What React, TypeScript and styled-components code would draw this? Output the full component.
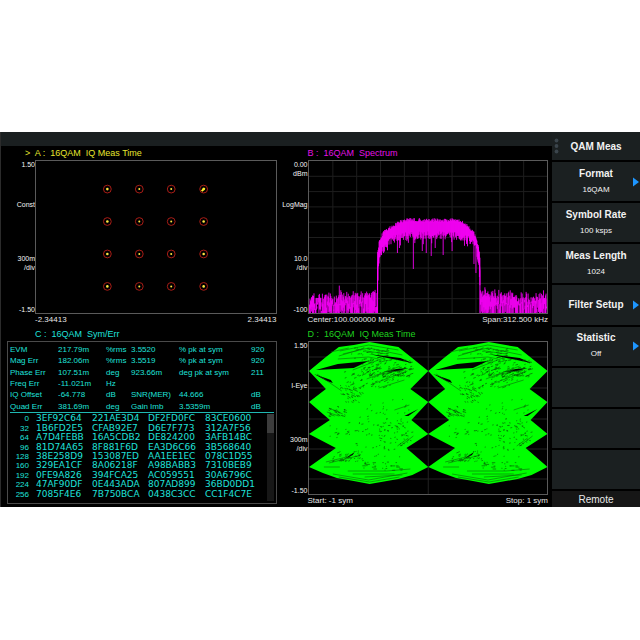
import React from "react";
import styled, { createGlobalStyle } from "styled-components";

const GlobalStyle = createGlobalStyle`
  * { box-sizing: border-box; }
  body {
    margin: 0;
    background: #fff;
    font-family: "Liberation Sans", Arial, sans-serif;
  }
`;

const Page = styled.div`
  padding: 132px 0;
`;

const Analyzer = styled.main`
  display: grid;
  grid-template-columns: 1fr 88px;
  background: #000;
`;

const Screen = styled.div`
  display: flex;
  flex-direction: column;
  border-left: 1px solid #2b2b2b;
  min-width: 0;
`;

const StatusBar = styled.header`
  height: 14px;
  background: #1a1f20;
`;

const Traces = styled.div`
  display: grid;
  grid-template-columns: 1fr 1fr;
  row-gap: 1px;
  flex: 1;
`;

const Panel = styled.section<{ $inset: number }>`
  display: flex;
  flex-direction: column;
  min-width: 0;
  padding-right: ${(p) => p.$inset}px;
`;

const Title = styled.h2<{ $color: string; $indent: number }>`
  margin: 0;
  padding-left: ${(p) => p.$indent}px;
  font-size: 9px;
  line-height: 14px;
  height: 14px;
  font-weight: 400;
  white-space: pre;
  color: ${(p) => p.$color};
`;

const PlotRow = styled.div<{ $gutter: number }>`
  display: grid;
  grid-template-columns: ${(p) => p.$gutter}px 1fr;
  height: 154px;
`;

const Axis = styled.div`
  display: grid;
  grid-template-rows: 40px 54px 1fr 9px;
  font-size: 7px;
  line-height: 9px;
  text-align: right;
  color: #f4f4f4;
`;

const AxisLabel = styled.div`
  white-space: pre-line;
`;

const Plot = styled.svg`
  display: block;
  width: 100%;
  height: 154px;
  border: 1px solid #5a5a5a;
  background: #000;
`;

const Range = styled.div<{ $gutter: number }>`
  display: flex;
  justify-content: space-between;
  padding-left: ${(p) => p.$gutter}px;
  font-size: 8px;
  line-height: 12px;
  color: #e6e6e6;
`;

const Report = styled.div`
  flex: 1;
  display: flex;
  flex-direction: column;
  margin: 0 0 3px 6px;
  padding: 2px;
  border: 1px solid #4a4a4a;
  color: #1fe0da;
`;

const ErrTable = styled.table`
  width: 100%;
  height: 68px;
  table-layout: fixed;
  border-collapse: collapse;
  font-size: 8px;
  line-height: 9px;
  td, th {
    padding: 0;
    text-align: left;
    font-weight: 400;
    white-space: nowrap;
  }
`;

const DumpRow = styled.div`
  display: grid;
  grid-template-columns: 1fr 7px;
  height: 89px;
  border-top: 1px solid #1fb8b2;
`;

const DumpTable = styled.table`
  height: 85px;
  margin-top: 1px;
  table-layout: fixed;
  border-collapse: collapse;
  font-family: "DejaVu Sans", Verdana, sans-serif;
  font-size: 9px;
  line-height: 9px;
  td {
    padding: 0;
    white-space: nowrap;
  }
  th {
    padding: 0 7px 0 0;
    font-family: "Liberation Sans", Arial, sans-serif;
    font-size: 8px;
    font-weight: 400;
    text-align: right;
  }
`;

const ScrollTrack = styled.div`
  margin-top: 1px;
  background: #171717;
`;

const ScrollThumb = styled.div`
  height: 19px;
  background: #3c3c3c;
`;

const Sidebar = styled.nav`
  display: flex;
  flex-direction: column;
  gap: 2px;
`;

const MenuHeader = styled.div`
  display: grid;
  grid-template-columns: 8px 1fr 8px;
  align-items: center;
  height: 28px;
  background: #1b2021;
  color: #f2f2f2;
  font-size: 10px;
  font-weight: 700;
  text-align: center;
  white-space: nowrap;
`;

const MenuItem = styled.button`
  flex: 1;
  display: grid;
  grid-template-columns: 8px 1fr 8px;
  align-items: center;
  margin: 0;
  padding: 0;
  border: 0;
  background: #1b2021;
  font-family: inherit;
  color: #f2f2f2;
  text-align: center;
`;

const MenuText = styled.span`
  grid-column: 2;
  display: flex;
  flex-direction: column;
  white-space: nowrap;
`;

const MenuLabel = styled.span`
  font-size: 10px;
  line-height: 16px;
  font-weight: 700;
`;

const MenuValue = styled.span`
  font-size: 8px;
  line-height: 16px;
`;

const Remote = styled.div`
  height: 16px;
  background: #161616;
  color: #e8e8e8;
  font-size: 10px;
  line-height: 17px;
  text-align: center;
`;

const W = 240;
const H = 152;

function seeded(seed: number) {
  let s = seed;
  return () => {
    s = (s * 16807) % 2147483647;
    return s / 2147483647;
  };
}

function envelope(points: number[][], x: number) {
  for (let i = 1; i < points.length; i++) {
    const [x0, y0] = points[i - 1];
    const [x1, y1] = points[i];
    if (x <= x1) return y0 + ((y1 - y0) * (x - x0)) / (x1 - x0);
  }
  return points[points.length - 1][1];
}

function spectrumPath() {
  const rnd = seeded(4211);
  const top = [[69, 92], [71, 79], [74, 73], [78, 69], [85, 65], [92, 61], [100, 59], [150, 59], [158, 63], [164, 69], [168, 76], [171, 88], [173, 104]];
  const low = [[69, 134], [70, 104], [73, 92], [78, 85], [85, 79], [95, 76], [145, 75], [156, 77], [164, 81], [168, 90], [171, 104], [173, 142]];
  const spikes: Record<number, number> = { 89: 92, 91: 87, 105: 108, 114: 90, 118: 92, 123: 95, 127: 87, 135: 94, 144: 90, 166: 103, 168: 112 };
  let d = "";
  for (let x = 0; x <= W; x += 0.5) {
    let a: number;
    let b: number;
    if (x < 69 || x > 172) {
      const lift = x < 69 ? x / 18 : (240 - x) / 16;
      a = 138 - lift - rnd() * 8 + rnd() * rnd() * 18;
      b = rnd() > 0.4 ? H : 141 + rnd() * 11;
      if (rnd() > 0.96) a -= 4;
    } else {
      a = envelope(top, x) + rnd() * 4 - 2;
      b = envelope(low, x) + rnd() * 8 - 5;
      if (rnd() > 0.9) b += 5;
      if (Number.isInteger(x) && spikes[x]) b = spikes[x];
    }
    d += `M${x} ${a.toFixed(1)}V${b.toFixed(1)}`;
  }
  return d;
}

const LOBE =
  "M0 29L17 15L30 5L45 3L61 0L78 3L90 5L105 17L120 29L102 47L120 60L103 78L120 92L98 106L120 125L104 133L90 137L61 142L45 139L28 136L14 131L0 125L27 106L0 92L21 78L0 60L17 47Z";

function flecks() {
  const rnd = seeded(977);
  const areas = [
    { x: 42, y: 6, w: 38, h: 12, n: 40, slope: -0.15, len: 5 },
    { x: 52, y: 18, w: 50, h: 17, n: 130, slope: -0.3, len: 4 },
    { x: 34, y: 30, w: 60, h: 16, n: 60, slope: -0.35, len: 4 },
    { x: 31, y: 43, w: 24, h: 17, n: 44, slope: 0.45, len: 4 },
    { x: 19, y: 64, w: 17, h: 10, n: 30, slope: 0.4, len: 3 },
    { x: 50, y: 55, w: 50, h: 30, n: 30, slope: -0.3, len: 1 },
    { x: 18, y: 80, w: 86, h: 16, n: 50, slope: -0.2, len: 2 },
    { x: 70, y: 78, w: 32, h: 26, n: 30, slope: 0.25, len: 3 },
    { x: 22, y: 111, w: 30, h: 9, n: 34, slope: -0.4, len: 4 },
    { x: 43, y: 100, w: 50, h: 20, n: 30, slope: -0.2, len: 1 },
    { x: 52, y: 119, w: 40, h: 10, n: 30, slope: 0, len: 5 },
  ];
  let d = "";
  areas.forEach((r) => {
    for (let i = 0; i < r.n; i++) {
      const x = r.x + rnd() * r.w;
      const y = r.y + rnd() * r.h;
      const len = 1 + rnd() * rnd() * r.len;
      d += `M${x.toFixed(1)} ${y.toFixed(1)}l${len.toFixed(1)} ${(len * r.slope).toFixed(1)}`;
    }
  });
  return d;
}

const SPECTRUM = spectrumPath();
const FLECKS = flecks();

function Grid() {
  const lines = [1, 2, 3, 4, 5, 6, 7, 8, 9];
  return (
    <g stroke="#1e1e1e" shapeRendering="crispEdges">
      {lines.map((i) => (
        <path key={i} d={`M${i * 24} 0V${H}M0 ${i * 15.3}H${W}`} />
      ))}
    </g>
  );
}

function Constellation() {
  const xs = [71.5, 103.5, 135.5, 168];
  const ys = [28, 60.5, 93, 125.5];
  return (
    <Plot viewBox={`0 0 ${W} ${H}`} role="img" aria-label="IQ constellation">
      {ys.map((y, r) =>
        xs.map((x, c) => (
          <g key={`${x}-${y}`}>
            <circle cx={x} cy={y} r="3.9" fill="none" stroke="#a81c16" />
            <circle cx={x} cy={y} r={c === 0 || c === 3 ? 1.3 : 1} fill="#ffe640" />
            {c === 3 && r === 0 && <path d={`M${x - 2} ${y + 2}l3-3`} stroke="#fff22a" strokeWidth="2" />}
          </g>
        ))
      )}
    </Plot>
  );
}

function Spectrum() {
  return (
    <Plot viewBox={`0 0 ${W} ${H}`} preserveAspectRatio="none" role="img" aria-label="Spectrum">
      <Grid />
      <path d={SPECTRUM} stroke="#ff00ff" strokeWidth="0.85" fill="none" />
      <path d="M69 152V108L71 88M172 152V110L170 84" stroke="#ff00ff" fill="none" />
    </Plot>
  );
}

function EyeLobe() {
  return (
    <>
      <path d={LOBE} fill="#00ff00" />
      <g fill="#000">
        <path d="M7 28L29 22L60 19L45 26Z" />
        <path d="M5 32L22 38L24 41L18 39Z" />
        <path d="M60 12L92 16L104 21L84 17Z" />
        <path d="M76 30L88 27L100 26L90 29Z" />
        <path d="M34 118L46 110L44 113Z" />
        <path d="M96 74L110 67L100 74Z" />
      </g>
      <g stroke="#0a6a0a" fill="none" strokeWidth="0.6">
        <path d="M31 9L60 3L90 8M34 12L60 6L94 13M29 17L60 15L70 17M57 9L79 12M22 10L40 6M30 14L50 8" />
        <path d="M58 37L92 24M64 42L99 29M70 46L96 38M68 33L94 28M44 28L75 16M8 32L33 49" />
        <path d="M15 125H31M24 132L60 138L99 131M30 135L61 140L91 135M39 129L78 129L102 127M44 132L86 132M56 135L94 133M17 120L38 115M20 121L49 114" />
        <path d="M86 68L101 63M89 104L100 96M92 104L105 94M18 70L30 74M20 66L34 72" />
      </g>
      <path d={FLECKS} stroke="#064a06" strokeWidth="0.6" fill="none" />
    </>
  );
}

function EyeDiagram() {
  return (
    <Plot viewBox={`0 0 ${W} ${H}`} preserveAspectRatio="none" role="img" aria-label="I-Eye diagram">
      <path
        d={`M120 0V${H}M0 15H${W}M0 46H${W}M0 77H${W}M0 107H${W}M0 137H${W}`}
        stroke="#222"
        shapeRendering="crispEdges"
      />
      <EyeLobe />
      <g transform="translate(120 0)">
        <EyeLobe />
      </g>
    </Plot>
  );
}

type TraceProps = {
  title: string;
  color: string;
  gutter: number;
  titleIndent?: number;
  inset?: number;
  axis: string[];
  range: [string, string];
  children: React.ReactNode;
};

function Trace({ title, color, gutter, titleIndent, inset = 0, axis, range, children }: TraceProps) {
  return (
    <Panel $inset={inset}>
      <Title $color={color} $indent={titleIndent ?? gutter}>{title}</Title>
      <PlotRow $gutter={gutter}>
        <Axis>
          {axis.map((label) => (
            <AxisLabel key={label}>{label}</AxisLabel>
          ))}
        </Axis>
        {children}
      </PlotRow>
      <Range $gutter={gutter}>
        <span>{range[0]}</span>
        <span>{range[1]}</span>
      </Range>
    </Panel>
  );
}

const ERRORS = [
  ["EVM", "217.79m", "%rms", "3.5520", "% pk at sym", "920"],
  ["Mag Err", "182.06m", "%rms", "3.5519", "% pk at sym", "920"],
  ["Phase Err", "107.51m", "deg", "923.66m", "deg pk at sym", "211"],
  ["Freq Err", "-11.021m", "Hz", "", "", ""],
  ["IQ Offset", "-64.778", "dB", "SNR(MER)", "44.666", "dB"],
  ["Quad Err", "381.69m", "deg", "Gain Imb", "3.5359m", "dB"],
];

const DUMP = [
  ["0", "3EF92C64", "221AE3D4", "DF2FD0FC", "83CE0600"],
  ["32", "1B6FD2E5", "CFAB92E7", "D6E7F773", "312A7F56"],
  ["64", "A7D4FEBB", "16A5CDB2", "DE824200", "3AFB14BC"],
  ["96", "81D74A65", "8F881F6D", "EA3D6C66", "3B568640"],
  ["128", "38E258D9", "153087ED", "AA1EE1EC", "078C1D55"],
  ["160", "329EA1CF", "8A06218F", "A98BABB3", "7310BEB9"],
  ["192", "0FE9A826", "394FCA25", "AC059551", "30A6796C"],
  ["224", "47AF90DF", "0E443ADA", "807AD899", "36BD0DD1"],
  ["256", "7085F4E6", "7B750BCA", "0438C3CC", "CC1F4C7E"],
];

function SymbolErrors() {
  return (
    <Panel $inset={0}>
      <Title $color="#1fe0da" $indent={34}>{"C :  16QAM  Sym/Err"}</Title>
      <Report>
        <ErrTable>
          <colgroup>
            <col width="48" />
            <col width="48" />
            <col width="25" />
            <col width="48" />
            <col width="72" />
            <col />
          </colgroup>
          <tbody>
            {ERRORS.map((row) => (
              <tr key={row[0]}>
                <th scope="row">{row[0]}</th>
                {row.slice(1).map((cell, i) => (
                  <td key={i}>{cell}</td>
                ))}
              </tr>
            ))}
          </tbody>
        </ErrTable>
        <DumpRow>
          <DumpTable>
            <colgroup>
              <col width="26" />
              <col width="56" />
              <col width="56" />
              <col width="57" />
              <col />
            </colgroup>
            <tbody>
              {DUMP.map((row) => (
                <tr key={row[0]}>
                  <th scope="row">{row[0]}</th>
                  {row.slice(1).map((cell) => (
                    <td key={cell}>{cell}</td>
                  ))}
                </tr>
              ))}
            </tbody>
          </DumpTable>
          <ScrollTrack>
            <ScrollThumb />
          </ScrollTrack>
        </DumpRow>
      </Report>
    </Panel>
  );
}

const MENU = [
  { label: "Format", value: "16QAM", arrow: true },
  { label: "Symbol Rate", value: "100 ksps", arrow: false },
  { label: "Meas Length", value: "1024", arrow: false },
  { label: "Filter Setup", value: "", arrow: true },
  { label: "Statistic", value: "Off", arrow: true },
  { label: "", value: "", arrow: false },
  { label: "", value: "", arrow: false },
  { label: "", value: "", arrow: false },
];

export default function App() {
  return (
    <Page>
      <GlobalStyle />
      <Analyzer>
        <Screen>
          <StatusBar />
          <Traces>
            <Trace
              title={">  A :  16QAM  IQ Meas Time"}
              color="#e6e62e"
              gutter={34}
              titleIndent={24}
              axis={["1.50", "Const", "300m\n/div", "-1.50"]}
              range={["-2.34413", "2.34413"]}
            >
              <Constellation />
            </Trace>
            <Trace
              title={"B :  16QAM  Spectrum"}
              color="#e312e3"
              gutter={31}
              inset={4}
              axis={["0.00\ndBm", "LogMag", "10.0\n/div", "-100"]}
              range={["Center:100.000000 MHz", "Span:312.500 kHz"]}
            >
              <Spectrum />
            </Trace>
            <SymbolErrors />
            <Trace
              title={"D :  16QAM  IQ Meas Time"}
              color="#1fd01f"
              gutter={31}
              inset={4}
              axis={["1.50", "I-Eye", "300m\n/div", "-1.50"]}
              range={["Start: -1 sym", "Stop: 1 sym"]}
            >
              <EyeDiagram />
            </Trace>
          </Traces>
        </Screen>
        <Sidebar aria-label="QAM Meas">
          <MenuHeader>
            <svg width="8" height="18" viewBox="0 0 8 18" fill="#3b454c" aria-hidden="true">
              <circle cx="4.5" cy="3.5" r="1.9" />
              <circle cx="4.5" cy="9" r="1.9" />
              <circle cx="4.5" cy="14.5" r="1.9" />
            </svg>
            <span>QAM Meas</span>
          </MenuHeader>
          {MENU.map((item, i) => (
            <MenuItem key={i} type="button" aria-label={item.label || "Unassigned"}>
              <MenuText>
                {item.label && <MenuLabel>{item.label}</MenuLabel>}
                {item.value && <MenuValue>{item.value}</MenuValue>}
              </MenuText>
              {item.arrow && (
                <svg width="8" height="10" viewBox="0 0 8 10" aria-hidden="true">
                  <path d="M1 0.5L7 5L1 9.5Z" fill="#1e96ff" />
                </svg>
              )}
            </MenuItem>
          ))}
          <Remote>Remote</Remote>
        </Sidebar>
      </Analyzer>
    </Page>
  );
}
